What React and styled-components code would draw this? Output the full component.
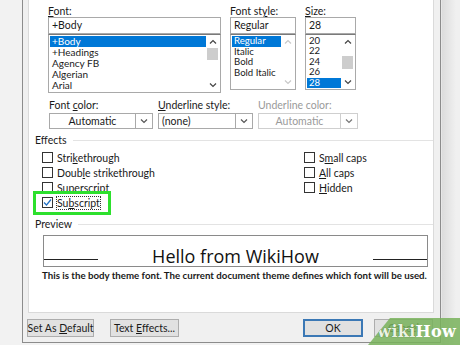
import React from 'react';
import styled, { createGlobalStyle, css } from 'styled-components';

const GlobalStyle = createGlobalStyle`
  html, body {
    margin: 0;
    padding: 0;
    width: 460px;
    height: 345px;
    overflow: hidden;
    background: #f2f2f2;
  }
  body {
    font-family: Lato, "Noto Sans", sans-serif;
    font-size: 10.5px;
    color: #1a1a1a;
  }
`;

const Page = styled.div`
  position: relative;
  display: flex;
  height: 345px;
  padding-left: 22px;
  box-sizing: border-box;
  background: linear-gradient(to right, #f2f2f2 0, #f2f2f2 441px, #dcdcdc 442px, #f0f0f0 456px);
`;

const Dialog = styled.div`
  width: 419px;
  height: 343px;
  box-sizing: border-box;
  display: flex;
  flex-direction: column;
  background: #f0f0f0;
  border: 1px solid #8c8c8c;
  border-top: none;
`;

const Panel = styled.div`
  flex: 1;
  margin: 0 6px 0 5px;
  background: #fff;
  border: 1px solid #dadada;
  border-top: none;
  padding-top: 5px;
  display: flex;
  flex-direction: column;
`;

const FontGrid = styled.div`
  display: grid;
  grid-template-columns: 173px 66px 51px;
  column-gap: 9px;
  margin-left: 19px;
`;

const Field = styled.div`
  display: flex;
  flex-direction: column;
`;

const Label = styled.div`
  height: 12px;
  line-height: 12px;
  color: ${p => (p.disabled ? '#9a9a9a' : '#1a1a1a')};
  white-space: nowrap;
  margin-bottom: ${p => p.gap || 0}px;
`;

const Key = styled.span`
  text-decoration: underline;
`;

const TextBox = styled.div`
  height: 17px;
  box-sizing: border-box;
  border: 1px solid #a9a9a9;
  padding: 0 3px;
  line-height: 15px;
`;

const List = styled.div`
  height: ${p => p.h}px;
  box-sizing: border-box;
  border: 1px solid #a9a9a9;
  border-top-color: #7a7a7a;
  display: flex;
  padding: 1px;
`;

const Items = styled.div`
  flex: 1;
  display: flex;
  flex-direction: column;
  overflow: hidden;
`;

const Item = styled.div`
  height: ${p => p.lh}px;
  line-height: ${p => p.lh}px;
  padding-left: 2px;
  font-size: ${p => (p.lh < 11 ? 9.6 : 10)}px;
  white-space: nowrap;
  ${p =>
    p.selected &&
    css`
      background: #0078d7;
      color: #fff;
    `}
`;

const Scroll = styled.div`
  width: 13px;
  display: flex;
  flex-direction: column;
  align-items: center;
  justify-content: space-between;
  padding: 3px 0;
  background: #fff;
`;

const Thumb = styled.div`
  width: 11px;
  height: ${p => p.h}px;
  margin-top: ${p => p.top}px;
  background: #cdcdcd;
  flex: none;
`;

const Spacer = styled.div`
  flex: 1;
`;

const Chevron = ({ up, color = '#444' }) => (
  <svg width="8" height="5" viewBox="0 0 8 5">
    <polyline
      points={up ? '1,4.5 4,1.5 7,4.5' : '1,0.5 4,3.5 7,0.5'}
      fill="none"
      stroke={color}
      strokeWidth="1.2"
    />
  </svg>
);

const ScrollBar = ({ thumbTop, thumbH, disabled }) => {
  const color = disabled ? '#c8c8c8' : '#444';
  return (
    <Scroll>
      <Chevron up color={color} />
      {disabled ? <Spacer /> : <Thumb top={thumbTop} h={thumbH} />}
      {!disabled && <Spacer />}
      <Chevron color={color} />
    </Scroll>
  );
};

const Row = styled.div`
  display: flex;
  gap: 5px;
  margin: 6px 0 0 20px;
`;

const Select = styled.div`
  width: ${p => p.w}px;
  height: 16px;
  box-sizing: border-box;
  border: 1px solid ${p => (p.disabled ? '#cfcfcf' : '#a9a9a9')};
  display: flex;
  color: ${p => (p.disabled ? '#9a9a9a' : '#1a1a1a')};
`;

const SelectValue = styled.div`
  flex: 1;
  line-height: 14px;
  padding: 0 3px;
  text-align: ${p => (p.center ? 'center' : 'left')};
`;

const SelectArrow = styled.div`
  width: 16px;
  border-left: 1px solid ${p => (p.disabled ? '#cfcfcf' : '#a9a9a9')};
  display: flex;
  align-items: center;
  justify-content: center;
`;

const Dropdown = ({ w, value, center, disabled }) => (
  <Select w={w} disabled={disabled}>
    <SelectValue center={center}>{value}</SelectValue>
    <SelectArrow disabled={disabled}>
      <Chevron color={disabled ? '#777' : '#555'} />
    </SelectArrow>
  </Select>
);

const Heading = styled.div`
  display: flex;
  align-items: center;
  gap: 6px;
  margin: ${p => p.mt}px 0 0 6px;
  height: 12px;
  color: #1a1a1a;

  &::after {
    content: '';
    flex: 1;
    height: 1px;
    background: #e3e3e3;
  }
`;

const Effects = styled.div`
  display: grid;
  grid-template-columns: 262px 1fr;
  margin: 4px 0 0 13px;
`;

const Column = styled.div`
  display: flex;
  flex-direction: column;
`;

const Check = styled.div`
  position: relative;
  height: 15px;
  display: flex;
  align-items: center;
  gap: 4px;
  white-space: nowrap;

  ${p =>
    p.highlight &&
    css`
      &::after {
        content: '';
        position: absolute;
        left: -9px;
        top: -4px;
        width: 72px;
        height: 18px;
        border: 3px solid #2de02d;
      }
    `}
`;

const Box = styled.span`
  width: 11px;
  height: 11px;
  box-sizing: border-box;
  border: 1px solid #333;
  background: #fff;
  display: flex;
  align-items: center;
  justify-content: center;
`;

const CheckText = styled.span`
  ${p =>
    p.focus &&
    css`
      outline: 1px dotted #333;
      outline-offset: 0;
    `}
`;

const CheckItem = ({ checked, highlight, children }) => (
  <Check highlight={highlight}>
    <Box>
      {checked && (
        <svg width="9" height="9" viewBox="0 0 9 9">
          <polyline points="1,4.5 3.5,7 8,1.5" fill="none" stroke="#1f6fc4" strokeWidth="1.2" />
        </svg>
      )}
    </Box>
    <CheckText focus={highlight}>{children}</CheckText>
  </Check>
);

const PreviewBox = styled.div`
  margin: 5px 5px 0 14px;
  height: 32px;
  box-sizing: border-box;
  border: 1px solid #8a8a8a;
  display: flex;
  align-items: flex-end;
`;

const Rule = styled.div`
  width: 54px;
  height: 1px;
  background: #222;
  margin-bottom: 6px;
`;

const HelloText = styled.div`
  flex: 1;
  text-align: center;
  font-family: "Open Sans", "Noto Sans", sans-serif;
  font-size: 18px;
  line-height: 22px;
  color: #111;
  margin-bottom: -1px;
`;

const Caption = styled.div`
  margin: 2px 0 0 13px;
  font-size: 9.7px;
  font-weight: 700;
  color: #1a1a1a;
  white-space: nowrap;
`;

const ButtonBar = styled.div`
  height: 29px;
  display: flex;
  align-items: center;
  padding: 0 6px 0 4px;
  gap: 16px;
`;

const Button = styled.div`
  width: ${p => p.w}px;
  height: 18px;
  box-sizing: border-box;
  background: #e1e1e1;
  border: ${p => (p.primary ? '2px solid #3b78b5' : '1px solid #adadad')};
  display: flex;
  align-items: center;
  justify-content: center;
  color: #1a1a1a;
  white-space: pre;
  margin-left: ${p => p.ml || 0}px;
`;

const Watermark = styled.div`
  position: absolute;
  right: 0;
  bottom: 0;
  width: 92px;
  height: 27px;
  display: flex;
  align-items: center;
  justify-content: flex-end;
  padding-right: 4px;
  box-sizing: border-box;
  background: rgba(120, 178, 90, 0.85);
  clip-path: polygon(22px 0, 100% 0, 100% 100%, 0 100%);
  font-family: "DejaVu Serif", "Liberation Serif", serif;
  font-weight: bold;
  font-size: 16px;
  color: #fff;
  letter-spacing: 0.3px;
`;

const Wiki = styled.span`
  color: #eaf3e2;
  text-shadow: 0 0 1px #3c5f2c;
`;

const fonts = ['+Body', '+Headings', 'Agency FB', 'Algerian', 'Arial'];
const styles = ['Regular', 'Italic', 'Bold', 'Bold Italic'];
const sizes = ['20', '22', '24', '26', '28'];

export default function App() {
  return (
    <>
      <GlobalStyle />
      <Page>
        <Dialog>
          <Panel>
            <FontGrid>
              <Field>
                <Label><Key>F</Key>ont:</Label>
                <TextBox>+Body</TextBox>
                <List h={59}>
                  <Items>
                    {fonts.map((f, i) => (
                      <Item key={f} lh={11} selected={i === 0}>{f}</Item>
                    ))}
                  </Items>
                  <ScrollBar thumbTop={4} thumbH={12} />
                </List>
              </Field>
              <Field>
                <Label>Font st<Key>y</Key>le:</Label>
                <TextBox>Regular</TextBox>
                <List h={56}>
                  <Items>
                    {styles.map((s, i) => (
                      <Item key={s} lh={10.5} selected={i === 0}>{s}</Item>
                    ))}
                  </Items>
                  <ScrollBar disabled />
                </List>
              </Field>
              <Field>
                <Label><Key>S</Key>ize:</Label>
                <TextBox>28</TextBox>
                <List h={56}>
                  <Items>
                    {sizes.map((s, i) => (
                      <Item key={s} lh={10.4} selected={i === 4}>{s}</Item>
                    ))}
                  </Items>
                  <ScrollBar thumbTop={12} thumbH={13} />
                </List>
              </Field>
            </FontGrid>

            <Row>
              <Field>
                <Label gap={2}>Font <Key>c</Key>olor:</Label>
                <Dropdown w={104} value="Automatic" center />
              </Field>
              <Field>
                <Label gap={2}><Key>U</Key>nderline style:</Label>
                <Dropdown w={95} value="(none)" />
              </Field>
              <Field>
                <Label gap={2} disabled>Underline color:</Label>
                <Dropdown w={100} value="Automatic" center disabled />
              </Field>
            </Row>

            <Heading mt={5}>Effects</Heading>
            <Effects>
              <Column>
                <CheckItem>Stri<Key>k</Key>ethrough</CheckItem>
                <CheckItem>Doub<Key>l</Key>e strikethrough</CheckItem>
                <CheckItem>Su<Key>p</Key>erscript</CheckItem>
                <CheckItem checked highlight>Su<Key>b</Key>script</CheckItem>
              </Column>
              <Column>
                <CheckItem>S<Key>m</Key>all caps</CheckItem>
                <CheckItem><Key>A</Key>ll caps</CheckItem>
                <CheckItem><Key>H</Key>idden</CheckItem>
              </Column>
            </Effects>

            <Heading mt={8}>Preview</Heading>
            <PreviewBox>
              <Rule />
              <HelloText>Hello from WikiHow</HelloText>
              <Rule />
            </PreviewBox>
            <Caption>
              This is the body theme font. The current document theme defines which font will be used.
            </Caption>
          </Panel>
          <ButtonBar>
            <Button w={67}><span>Set As <Key>D</Key>efault</span></Button>
            <Button w={69}><span>Text <Key>E</Key>ffects...</span></Button>
            <Button w={60} primary ml={108}>OK</Button>
            <Button w={59} ml={-5}>Cancel</Button>
          </ButtonBar>
        </Dialog>
        <Watermark>
          <Wiki>wiki</Wiki>How
        </Watermark>
      </Page>
    </>
  );
}
